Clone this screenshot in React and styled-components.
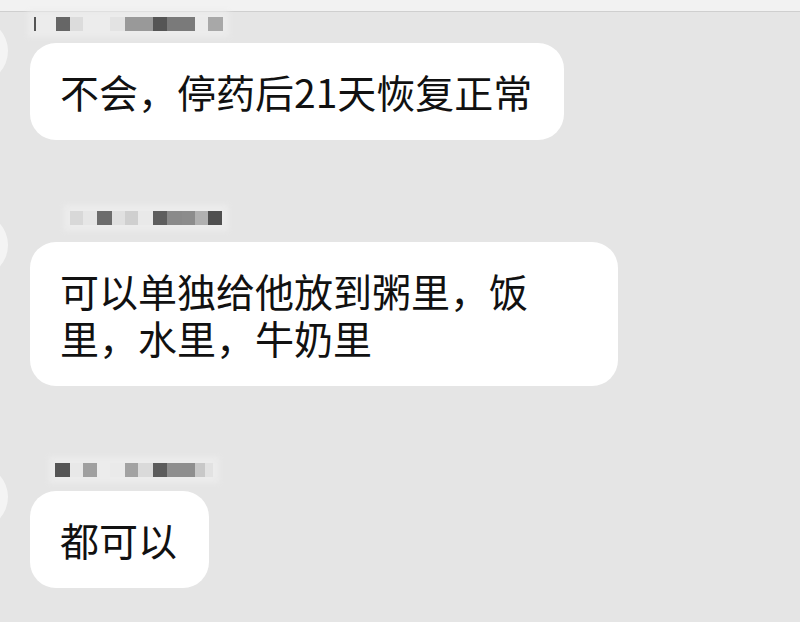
import React from "react";
import styled, { createGlobalStyle } from "styled-components";

const GlobalStyle = createGlobalStyle`
    html, body {
        margin: 0;
        padding: 0;
        background: #e5e5e5;
        overflow: hidden;
    }
    body {
        font-family: "Noto Sans CJK SC", "Noto Sans", sans-serif;
    }
`;

const Screen = styled.div`
    width: 800px;
    height: 622px;
    background: #e5e5e5;
    overflow: hidden;
`;

const TopBar = styled.div`
    height: 11px;
    background: #f2f2f2;
    border-bottom: 1px solid #cfcfcf;
`;

const Message = styled.div`
    display: flex;
    align-items: flex-start;
    margin-top: ${(p) => p.$top}px;
`;

const Avatar = styled.div`
    flex: none;
    width: 64px;
    height: 64px;
    margin-left: -56px;
    margin-right: 22px;
    margin-top: 2px;
    border-radius: 50%;
    background: #f4f4f4;
`;

const Body = styled.div`
    display: flex;
    flex-direction: column;
    align-items: flex-start;
`;

// Имя отправителя замазано мозаикой
const Name = styled.div`
    display: flex;
    height: 14px;
    margin-left: ${(p) => p.$offset}px;
    margin-bottom: ${(p) => p.$gap}px;
    background: #ececec;
    box-shadow: 0 0 6px 6px #ececec;
`;

const Pixel = styled.span`
    display: block;
    height: 100%;
    width: ${(p) => p.$w}px;
    background: ${(p) => p.$c};
`;

const Bubble = styled.div`
    box-sizing: border-box;
    width: ${(p) => p.$width || "auto"};
    padding: 25px 32px 25px 30px;
    background: #ffffff;
    border-radius: 26px;
    color: #111111;
    font-size: 39px;
    line-height: 47px;
    white-space: nowrap;
`;

const messages = [
    {
        top: 5,
        offset: 4,
        gap: 12,
        name: [
            [2, "#555"], [20, "#ececec"], [14, "#666"], [13, "#dcdcdc"], [27, "#ececec"],
            [15, "#e3e3e3"], [28, "#999"], [14, "#555"], [28, "#7a7a7a"], [13, "#ebebeb"], [15, "#a8a8a8"],
        ],
        lines: ["不会，停药后21天恢复正常"],
    },
    {
        top: 71,
        offset: 40,
        gap: 17,
        name: [
            [13, "#d8d8d8"], [14, "#e6e6e6"], [15, "#6c6c6c"], [13, "#e0e0e0"], [13, "#cfcfcf"],
            [15, "#e9e9e9"], [14, "#5e5e5e"], [15, "#8a8a8a"], [13, "#8c8c8c"], [13, "#b0b0b0"], [14, "#4f4f4f"],
        ],
        lines: ["可以单独给他放到粥里，饭", "里，水里，牛奶里"],
        width: "588px",
    },
    {
        top: 77,
        offset: 25,
        gap: 14,
        name: [
            [15, "#555"], [13, "#e8e8e8"], [14, "#a0a0a0"], [13, "#ececec"], [15, "#eaeaea"],
            [13, "#a2a2a2"], [15, "#dadada"], [14, "#5c5c5c"], [28, "#8e8e8e"], [10, "#c8c8c8"], [8, "#e2e2e2"],
        ],
        lines: ["都可以"],
    },
];

const App = () => {
    return (
        <Screen>
            <GlobalStyle />
            <TopBar />
            {messages.map((m, i) => (
                <Message key={i} $top={m.top}>
                    <Avatar />
                    <Body>
                        <Name $offset={m.offset} $gap={m.gap}>
                            {m.name.map(([w, c], j) => (
                                <Pixel key={j} $w={w} $c={c} />
                            ))}
                        </Name>
                        <Bubble $width={m.width}>
                            {m.lines.map((line, j) => (
                                <React.Fragment key={j}>
                                    {j > 0 && <br />}
                                    {line}
                                </React.Fragment>
                            ))}
                        </Bubble>
                    </Body>
                </Message>
            ))}
        </Screen>
    );
};

export default App;
